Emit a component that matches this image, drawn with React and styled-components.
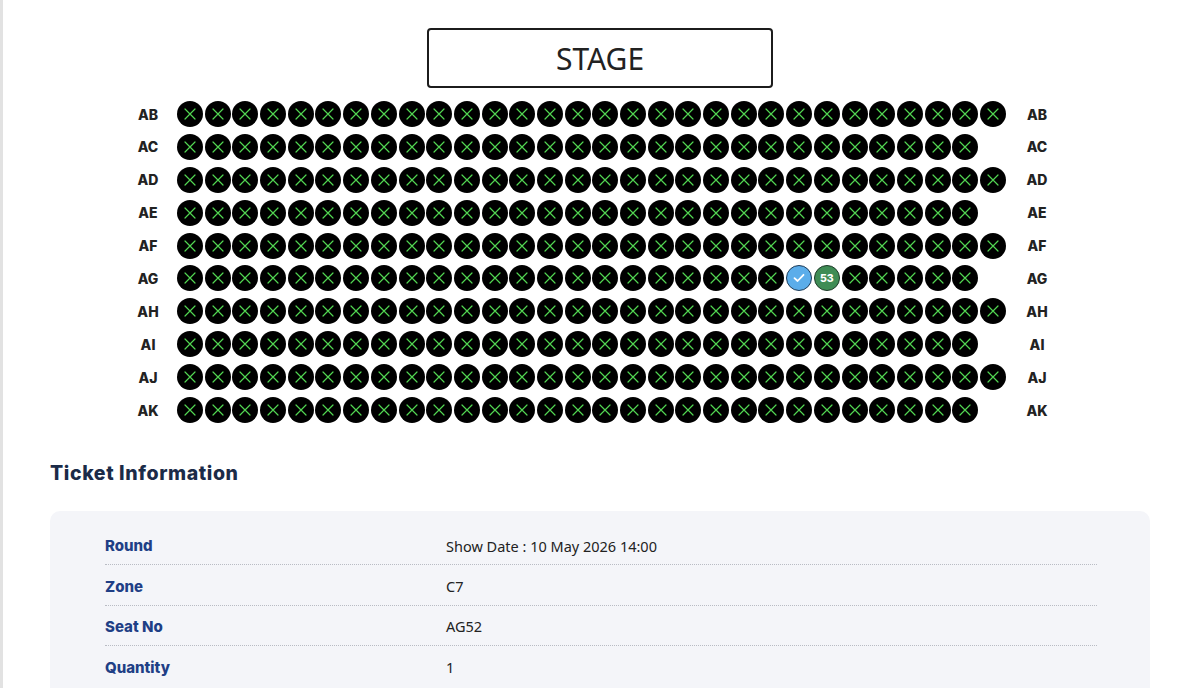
import styled, { createGlobalStyle } from "styled-components";

const GlobalStyle = createGlobalStyle`
  body {
    margin: 0;
    background: #ffffff;
    font-family: "Noto Sans", "Liberation Sans", sans-serif;
    color: #222;
  }
`;

const Page = styled.div`
  min-height: 100vh;
  box-shadow: inset 3px 0 0 #e2e2e2;
  box-sizing: border-box;
  padding-top: 28px;
`;

const Stage = styled.div`
  width: 346px;
  height: 60px;
  box-sizing: border-box;
  margin: 0 auto;
  border: 2px solid #1c1c1c;
  border-radius: 4px;
  display: flex;
  align-items: center;
  justify-content: center;
  font-size: 30px;
  color: #222;
`;

const SeatMap = styled.div`
  margin-top: 13px;
  padding-left: 128px;
  display: flex;
  flex-direction: column;
  gap: 6.9px;
`;

const Row = styled.div`
  display: flex;
  align-items: center;
  gap: 9px;
`;

const RowLabel = styled.div`
  width: 40px;
  text-align: center;
  font-family: "Inter", sans-serif;
  font-weight: 800;
  font-size: 14px;
  color: #222;
`;

const Seats = styled.div`
  width: 831px;
  display: flex;
  gap: 1.69px;
`;

const Seat = styled.div`
  width: 26px;
  height: 26px;
  flex: none;
  border-radius: 50%;
  box-sizing: border-box;
  display: flex;
  align-items: center;
  justify-content: center;
  background: ${(p) => (p.$kind === "mine" ? "#5badea" : p.$kind === "held" ? "#3f8c55" : "#000")};
  border: ${(p) => (p.$kind === "mine" ? "1.5px solid #1d3b57" : p.$kind === "held" ? "1.5px solid #1d3a28" : "none")};
  color: #fff;
  font-family: "Inter", sans-serif;
  font-weight: 800;
  font-size: 10.5px;
`;

const Heading = styled.h2`
  margin: 38px 0 0 50px;
  font-family: "Inter", sans-serif;
  font-weight: 800;
  font-size: 19.5px;
  letter-spacing: 0.6px;
  color: #1b2b48;
`;

const Panel = styled.div`
  margin: 26px 50px 0 50px;
  background: #f4f5f9;
  border-radius: 10px;
  padding: 14px 53px 16px 55px;
`;

const InfoRow = styled.div`
  display: grid;
  grid-template-columns: 341px 1fr;
  align-items: center;
  height: 40.4px;
  padding-top: 2px;
  border-bottom: ${(p) => (p.$last ? "none" : "1px dotted #b9bcc4")};
  box-sizing: border-box;
`;

const InfoLabel = styled.div`
  font-family: "Inter", sans-serif;
  font-weight: 800;
  font-size: 15px;
  color: #1f3f86;
`;

const InfoValue = styled.div`
  font-size: 14.5px;
  color: #222;
`;

const rows = ["AB", "AC", "AD", "AE", "AF", "AG", "AH", "AI", "AJ", "AK"];

function Cross() {
  return (
    <svg width="12" height="12" viewBox="0 0 12 12">
      <path d="M1 1L11 11M11 1L1 11" stroke="#52d652" strokeWidth="1.2" strokeLinecap="round" />
    </svg>
  );
}

function Check() {
  return (
    <svg width="12" height="10" viewBox="0 0 12 10">
      <path d="M1.5 5.2L4.6 8L10.5 1.8" stroke="#fff" strokeWidth="1.8" fill="none" strokeLinecap="round" strokeLinejoin="round" />
    </svg>
  );
}

function SeatRow({ name, index }) {
  const count = index % 2 === 0 ? 30 : 29;
  const seats = Array.from({ length: count }, (_, i) => {
    if (name === "AG" && i === 22) return <Seat key={i} $kind="mine"><Check /></Seat>;
    if (name === "AG" && i === 23) return <Seat key={i} $kind="held">53</Seat>;
    return <Seat key={i}><Cross /></Seat>;
  });
  return (
    <Row>
      <RowLabel>{name}</RowLabel>
      <Seats>{seats}</Seats>
      <RowLabel>{name}</RowLabel>
    </Row>
  );
}

const info = [
  ["Round", "Show Date : 10 May 2026 14:00"],
  ["Zone", "C7"],
  ["Seat No", "AG52"],
  ["Quantity", "1"],
];

export default function App() {
  return (
    <Page>
      <GlobalStyle />
      <Stage>STAGE</Stage>
      <SeatMap>
        {rows.map((r, i) => (
          <SeatRow key={r} name={r} index={i} />
        ))}
      </SeatMap>
      <Heading>Ticket Information</Heading>
      <Panel>
        {info.map(([k, v], i) => (
          <InfoRow key={k} $last={i === info.length - 1}>
            <InfoLabel>{k}</InfoLabel>
            <InfoValue>{v}</InfoValue>
          </InfoRow>
        ))}
      </Panel>
    </Page>
  );
}
